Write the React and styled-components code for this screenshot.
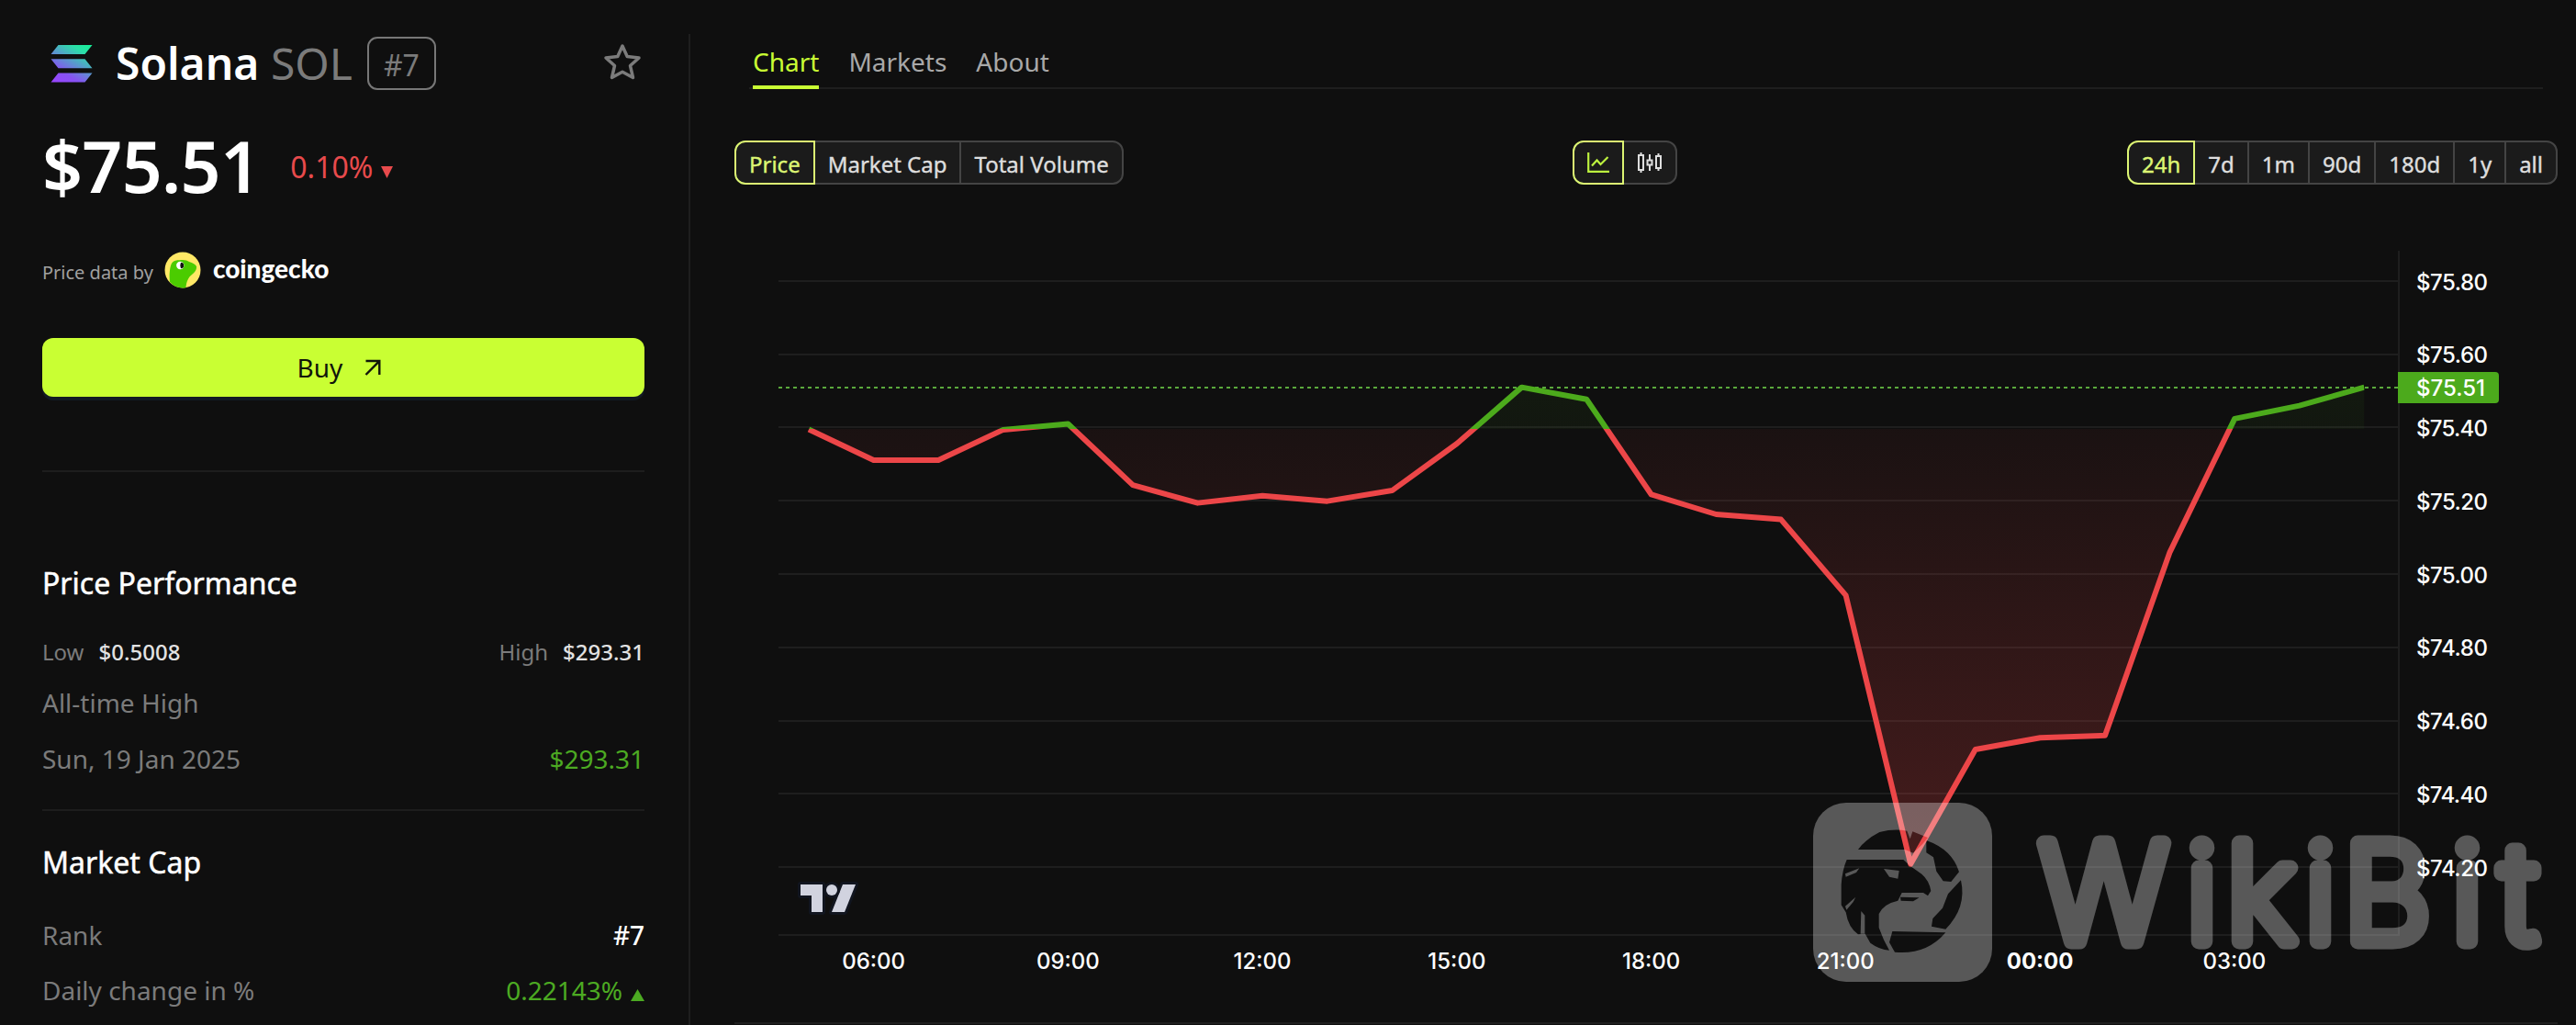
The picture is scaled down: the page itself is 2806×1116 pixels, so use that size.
import styled, { createGlobalStyle } from "styled-components";

const GlobalStyle = createGlobalStyle`
  * {
    box-sizing: border-box;
  }
  body {
    margin: 0;
    background: #0f0f0f;
    color: #fff;
    font-family: "Noto Sans", sans-serif;
  }
`;

const Page = styled.div`
  position: relative;
  width: 2806px;
  height: 1116px;
  display: grid;
  grid-template-columns: 752px 1fr;
  overflow: hidden;
`;

/* ---------- sidebar ---------- */

const Sidebar = styled.aside`
  margin-top: 37px;
  padding: 3px 48px 0 46px;
  border-right: 2px solid #1e1e1e;
`;

const CoinHeader = styled.header`
  display: flex;
  align-items: center;
  height: 58px;
  padding: 0 3px 0 9px;
`;

const CoinName = styled.h1`
  margin: 0 16px 0 25px;
  font-size: 48px;
  font-weight: 600;
  line-height: 58px;
  white-space: pre;

  span {
    color: #7b7b7b;
    font-weight: 400;
  }
`;

const RankBadge = styled.div`
  width: 75px;
  height: 58px;
  padding-top: 3px;
  border: 2px solid #777;
  border-radius: 11px;
  color: #7b7b7b;
  font-size: 32px;
  line-height: 52px;
  text-align: center;
`;

const StarIcon = styled.svg`
  margin: 0 0 4px auto;
`;

const PriceRow = styled.div`
  display: flex;
  align-items: center;
  height: 81px;
  margin-top: 42px;
`;

const Price = styled.div`
  font-size: 77px;
  font-weight: 600;
  letter-spacing: -0.7px;
  line-height: 81px;
`;

const PriceChange = styled.div`
  display: flex;
  align-items: center;
  gap: 9px;
  margin-left: 33px;
  padding-top: 2px;
  color: #e84a4c;
  font-size: 32px;
  line-height: 81px;
`;

const Attribution = styled.div`
  display: flex;
  align-items: center;
  height: 40px;
  margin-top: 53px;
  color: #a0a0a0;
  font-size: 20px;

  svg {
    margin: 0 13px 0 12px;
  }
`;

const AttributionText = styled.span`
  padding-top: 4px;
`;

const Gecko = styled.span`
  padding-bottom: 4px;
  color: #fff;
  font-family: Lato, sans-serif;
  font-size: 28px;
  font-weight: 900;
  line-height: 36px;
`;

const BuyButton = styled.button`
  display: flex;
  align-items: center;
  justify-content: center;
  gap: 24px;
  width: 656px;
  height: 64px;
  margin-top: 54px;
  padding: 0 9px 0 0;
  border: 0;
  border-radius: 12px;
  background: #c9ff33;
  box-shadow: 0 4px 0 #121a24;
  color: #10150a;
  font-family: inherit;
  font-size: 28px;
`;

const Divider = styled.hr`
  height: 2px;
  margin: ${(p) => p.$top}px 0 0;
  border: 0;
  background: #1d1d1d;
`;

const SectionTitle = styled.h2`
  margin: ${(p) => p.$top}px 0 0;
  font-size: 32px;
  font-weight: 400;
  line-height: 48px;
  -webkit-text-stroke: 0.5px currentColor;
`;

const Row = styled.div`
  display: flex;
  align-items: center;
  justify-content: space-between;
  height: 40px;
  margin-top: ${(p) => p.$top}px;
  color: #7b7b7b;
  font-size: ${(p) => (p.$small ? 24 : 28)}px;
`;

const Stat = styled.div`
  display: flex;
  gap: 16px;
`;

const Value = styled.span`
  display: flex;
  align-items: center;
  gap: 9px;
  color: ${(p) => p.$color || "#fff"};
  font-weight: ${(p) => p.$weight || 400};
`;

/* ---------- main ---------- */

const Main = styled.main`
  display: flex;
  flex-direction: column;
  padding: 37px 20px 0 48px;
`;

const Tabs = styled.nav`
  display: flex;
  gap: 32px;
  height: 60px;
  margin: 0 16px;
  padding: 0 4px;
  border-bottom: 2px solid #1e1e1e;
`;

const Tab = styled.a`
  height: 60px;
  border-bottom: 4px solid ${(p) => (p.$active ? "#c9ff33" : "transparent")};
  color: ${(p) => (p.$active ? "#c9ff33" : "#a8a8a8")};
  font-size: 28px;
  line-height: 60px;
`;

const Toolbar = styled.div`
  display: flex;
  justify-content: space-between;
  height: 48px;
  margin-top: 56px;
`;

const Segmented = styled.div`
  display: flex;
`;

const Segment = styled.button`
  display: flex;
  align-items: center;
  justify-content: center;
  height: 48px;
  margin: 0 0 0 -2px;
  padding: ${(p) => (p.$icon ? "0 14px" : "2px 14px 0")};
  border: 2px solid #444;
  background: #1b1b1b;
  color: #dedede;
  font-family: inherit;
  font-size: 24px;
  -webkit-text-stroke: 0.4px currentColor;

  &:first-child {
    margin-left: 0;
    border-radius: 12px 0 0 12px;
  }
  &:last-child {
    border-radius: 0 12px 12px 0;
  }
  ${(p) =>
    p.$active &&
    `
    z-index: 1;
    border-color: #dcf573;
    color: #dcf573;
  `}
`;

const ChartSvg = styled.svg`
  display: block;
  margin-top: 39px;
  font-family: Inter, sans-serif;
  font-size: 24px;
  font-weight: 500;
`;

const WatermarkSvg = styled.svg`
  position: absolute;
  left: 1960px;
  top: 860px;
  opacity: 0.3;
`;

/* ---------- data ---------- */

const metrics = ["Price", "Market Cap", "Total Volume"];
const ranges = ["24h", "7d", "1m", "90d", "180d", "1y", "all"];
const ticks = [75.8, 75.6, 75.4, 75.2, 75.0, 74.8, 74.6, 74.4, 74.2];
const hours = ["06:00", "09:00", "12:00", "15:00", "18:00", "21:00", "00:00", "03:00"];

// hourly closes, 05:00 -> 05:00
const prices = [
  75.395, 75.311, 75.311, 75.394, 75.41, 75.243, 75.194, 75.214, 75.199,
  75.228, 75.356, 75.51, 75.477, 75.217, 75.163, 75.149, 74.942, 74.208,
  74.521, 74.553, 74.559, 75.06, 75.424, 75.46, 75.51,
];

const toX = (i) => 881 + i * 70.6;
const toY = (price) => 306 + (75.8 - price) * 398.75;

const BASE_Y = 467;
const LEFT = 848;
const RIGHT = 2612;

function Triangle({ up, size = 13, height = 13 }) {
  const d = up ? `M0 ${height}H${size}L${size / 2} 0Z` : `M0 0H${size}L${size / 2} ${height}Z`;
  return (
    <svg width={size} height={height} style={{ marginTop: 11 }}>
      <path d={d} fill="currentColor" />
    </svg>
  );
}

function SolanaLogo() {
  return (
    <svg width="46" height="41" viewBox="0 0 46 41">
      <defs>
        <linearGradient id="sol" gradientUnits="userSpaceOnUse" x1="38" y1="-4" x2="10" y2="44">
          <stop offset="0" stopColor="#14f195" />
          <stop offset="0.2" stopColor="#2be0a8" />
          <stop offset="0.75" stopColor="#8752f3" />
          <stop offset="1" stopColor="#9945ff" />
        </linearGradient>
      </defs>
      <path
        d="M8.5 0H45.5L37.5 10H0.5ZM0.5 15.3H37.5L45.5 25.3H8.5ZM8.5 30.5H45.5L37.5 40.5H0.5Z"
        fill="url(#sol)"
      />
    </svg>
  );
}

function GeckoLogo() {
  return (
    <svg width="40" height="40" viewBox="0 0 40 40">
      <circle cx="20" cy="20" r="19.5" fill="#ffe866" />
      <path
        d="M6 33C5 26 6 14 9 11.5C11 9 15 9.5 18 9C22 8.6 25 9.4 27 11C31 12.5 34 13.5 35 16C35.5 19 34 22 30 25C26 28 24 33 23.5 39.2A19.5 19.5 0 0 1 6 33Z"
        fill="#4bcc00"
      />
      <circle cx="17.3" cy="15" r="4.2" fill="#fff" />
      <path d="M18 11.8A3.2 3.2 0 0 1 18 18.2Q16.5 15 18 11.8Z" fill="#111" />
    </svg>
  );
}

function Chart() {
  const points = prices.map((p, i) => `${toX(i)},${toY(p)}`).join(" ");
  const area = `${toX(0)},${BASE_Y} ${points} ${toX(prices.length - 1)},${BASE_Y}`;

  return (
    <ChartSvg width="1986" height="876" viewBox="800 240 1986 876">
      <defs>
        <clipPath id="above">
          <rect x={LEFT} y="240" width={toX(24) - LEFT} height={BASE_Y - 240} />
        </clipPath>
        <clipPath id="below">
          <rect x={LEFT} y={BASE_Y} width={RIGHT - LEFT} height="551" />
        </clipPath>
        <linearGradient id="green" gradientUnits="userSpaceOnUse" x1="0" y1="273" x2="0" y2={BASE_Y}>
          <stop offset="0" stopColor="#4caf1c" stopOpacity="0.12" />
          <stop offset="1" stopColor="#4caf1c" stopOpacity="0.05" />
        </linearGradient>
        <linearGradient id="red" gradientUnits="userSpaceOnUse" x1="0" y1={BASE_Y} x2="0" y2="1018">
          <stop offset="0" stopColor="#ef4446" stopOpacity="0.05" />
          <stop offset="1" stopColor="#ef4446" stopOpacity="0.28" />
        </linearGradient>
      </defs>

      <g fill="#1e1e1e">
        {ticks.map((t) => (
          <rect key={t} x={LEFT} y={Math.round(toY(t)) - 1} width={RIGHT - LEFT} height="2" />
        ))}
        <rect x={LEFT} y="1017" width={RIGHT - LEFT + 2} height="2" />
        <rect x={RIGHT} y="273" width="2" height="746" />
        <rect x="800" y="1113" width="1986" height="2" />
      </g>

      <polygon points={area} fill="url(#green)" clipPath="url(#above)" />
      <polygon points={area} fill="url(#red)" clipPath="url(#below)" />
      <path d={`M${LEFT} 422H${RIGHT}`} stroke="#5aa83c" strokeWidth="2" strokeDasharray="4 4" />
      <g fill="none" strokeWidth="6" strokeLinejoin="round">
        <polyline points={points} stroke="#4caa1c" clipPath="url(#above)" />
        <polyline points={points} stroke="#ec4648" clipPath="url(#below)" />
      </g>

      <g fill="#fff">
        {ticks.map((t) => (
          <text key={t} x="2632" y={toY(t) + 9.5} textLength="78">
            ${t.toFixed(2)}
          </text>
        ))}
        {hours.map((h, i) => (
          <text
            key={h}
            x={951.6 + i * 211.75}
            y="1055"
            textAnchor="middle"
            fontWeight={h === "00:00" ? 700 : 500}
          >
            {h}
          </text>
        ))}
      </g>
      <path d="M2612 405H2718Q2722 405 2722 409V435Q2722 439 2718 439H2612Z" fill="#4caa1c" />
      <text x="2632" y="431" fill="#fff">
        $75.51
      </text>

      <g fill="#d1d3df" stroke="#11151f" strokeWidth="6" strokeLinejoin="round" paintOrder="stroke">
        <path d="M872 963H896V993H884V975H872Z" />
        <path d="M918 963H932L920 993H906Z" />
        <circle cx="906" cy="969" r="6" />
      </g>
    </ChartSvg>
  );
}

function Watermark() {
  return (
    <WatermarkSvg width="846" height="230" viewBox="0 0 846 230">
      <mask id="eagle">
        <rect width="230" height="230" fill="#fff" />
        <g transform="scale(0.3333)" fill="#000">
          <path d="M192 195Q215 162 262 138Q310 126 352 134L362 160L370 136L420 156L402 178L372 206L345 195Z" />
          <path d="M415 165Q500 195 522 268L496 300L470 298L448 266L438 220L415 205Z" />
          <path d="M528 295Q548 385 478 455L432 446L436 420L468 386L486 340Z" />
          <path d="M304 462L478 466Q415 540 312 530L294 498Z" />
          {/* head and neck */}
          <path d="M155 228H340L362 248L400 275Q424 295 430 330L420 346L405 336H335L322 362Q275 372 260 405V450L276 490L294 524Q262 522 232 500L215 470L192 472Q160 450 152 400L137 376V310Q140 262 155 228Z" />
          <path d="M330 350L392 352L372 364L332 362Z" />
        </g>
        {/* eye and feather gaps */}
        <g transform="scale(0.3333)" fill="#fff">
          <path d="M276 258L326 264L322 290L294 284Z" />
          <path d="M150 274L196 256L186 270L152 284Z" />
          <path d="M150 380L184 350L176 366L154 392Z" />
          <path d="M202 396L214 410V470H200Z" />
        </g>
      </mask>
      <rect x="15" y="14" width="195" height="195" rx="36" fill="#fff" mask="url(#eagle)" />
      <text
        x="262 422 466 551 593 711 764"
        y="165"
        fill="#fff"
        stroke="#fff"
        strokeWidth="17"
        strokeLinejoin="round"
        fontFamily="Inter, sans-serif"
        fontWeight="200"
        fontSize="147"
      >
        WikiBit
      </text>
    </WatermarkSvg>
  );
}

function App() {
  return (
    <Page>
      <GlobalStyle />
      <Sidebar>
        <CoinHeader>
          <SolanaLogo />
          <CoinName>
            Solana <span>SOL</span>
          </CoinName>
          <RankBadge>#7</RankBadge>
          <StarIcon width="42" height="42" viewBox="0 0 42 42" fill="none" stroke="#7b7b7b" strokeWidth="3.5" strokeLinejoin="round">
            <path d="M21 4L26.2 15.5L39 17L29.5 25.5L32.5 38.5L21 32.2L9.5 38.5L12.5 25.5L3 17L15.8 15.5Z" />
          </StarIcon>
        </CoinHeader>
        <PriceRow>
          <Price>$75.51</Price>
          <PriceChange>
            0.10% <Triangle />
          </PriceChange>
        </PriceRow>
        <Attribution>
          <AttributionText>Price data by</AttributionText>
          <GeckoLogo />
          <Gecko>coingecko</Gecko>
        </Attribution>
        <BuyButton>
          Buy
          <svg width="18" height="18" viewBox="0 0 18 18" fill="none" stroke="currentColor" strokeWidth="2.4">
            <path d="M1.5 2H16.3V17M16 2.3L1.5 17" />
          </svg>
        </BuyButton>
        <Divider $top={80} />

        <SectionTitle $top={97}>Price Performance</SectionTitle>
        <Row $top={30} $small>
          <Stat>
            Low <Value $color="#e2e2e2" $weight={500}>$0.5008</Value>
          </Stat>
          <Stat>
            High <Value $color="#e2e2e2" $weight={500}>$293.31</Value>
          </Stat>
        </Row>
        <Row $top={16}>All-time High</Row>
        <Row $top={21}>
          Sun, 19 Jan 2025 <Value $color="#4caa22">$293.31</Value>
        </Row>
        <Divider $top={35} />

        <SectionTitle $top={32}>Market Cap</SectionTitle>
        <Row $top={35}>
          Rank <Value $weight={500}>#7</Value>
        </Row>
        <Row $top={20}>
          Daily change in %
          <Value $color="#4caa22">
            0.22143% <Triangle up size={15} />
          </Value>
        </Row>
      </Sidebar>

      <Main>
        <Tabs>
          <Tab $active>Chart</Tab>
          <Tab>Markets</Tab>
          <Tab>About</Tab>
        </Tabs>
        <Toolbar>
          <Segmented>
            {metrics.map((m, i) => (
              <Segment key={m} $active={i === 0}>
                {m}
              </Segment>
            ))}
          </Segmented>
          <Segmented>
            <Segment $active $icon>
              <svg width="24" height="22" viewBox="0 0 24 22" fill="none" stroke="#bdf23f" strokeWidth="2.2">
                <path d="M1.2 0V20.8H24M5 14.5L10.5 8.5L14.5 13L22.5 5" />
              </svg>
            </Segment>
            <Segment $icon>
              <svg width="28" height="24" viewBox="0 0 28 24" fill="none" stroke="#dedede" strokeWidth="2">
                <path d="M2 4H7V20H2ZM4.5 1V4M4.5 20V23M11.5 9.5H16.5V14.5H11.5ZM14 3V9.5M14 14.5V21M21 5H26V18H21ZM23.5 2V5M23.5 18V21" />
              </svg>
            </Segment>
          </Segmented>
          <Segmented>
            {ranges.map((r, i) => (
              <Segment key={r} $active={i === 0}>
                {r}
              </Segment>
            ))}
          </Segmented>
        </Toolbar>
        <Chart />
      </Main>
      <Watermark />
    </Page>
  );
}

export default App;
